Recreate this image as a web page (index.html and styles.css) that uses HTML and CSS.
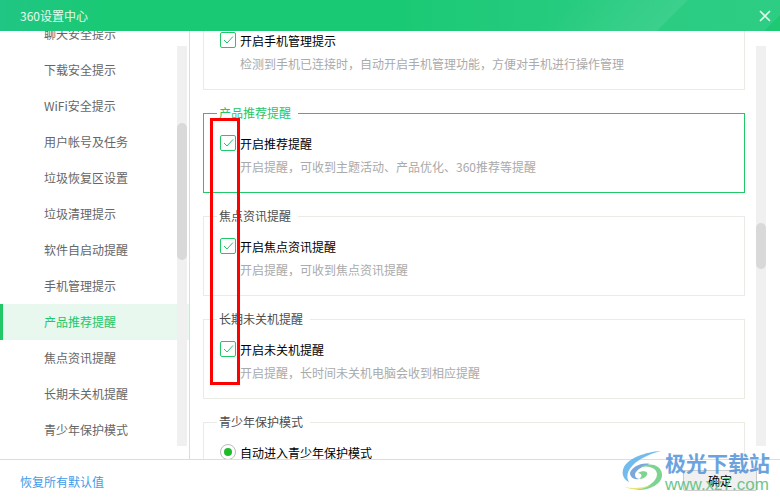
FILE: index.html
```html
<!DOCTYPE html>
<html lang="zh-CN">
<head>
<meta charset="UTF-8">
<title>360设置中心</title>
<link rel="stylesheet" href="styles.css">
</head>
<body>
<div class="window">
    <div class="header">
        <span class="header-title">360设置中心</span>
        <svg class="close" width="12" height="12" viewBox="0 0 12 12"><path d="M1 1L11 11M11 1L1 11" stroke="#e2f9ec" stroke-width="1.6" fill="none"/></svg>
    </div>
    <div class="main">
        <div class="sidebar">
            <ul class="menu">
                <li>聊天安全提示</li>
                <li>下载安全提示</li>
                <li>WiFi安全提示</li>
                <li>用户帐号及任务</li>
                <li>垃圾恢复区设置</li>
                <li>垃圾清理提示</li>
                <li>软件自启动提醒</li>
                <li>手机管理提示</li>
                <li class="active">产品推荐提醒</li>
                <li>焦点资讯提醒</li>
                <li>长期未关机提醒</li>
                <li>青少年保护模式</li>
            </ul>
            <div class="track"><div class="thumb thumb-menu"></div></div>
        </div>
        <div class="content">
            <div class="sections">
                <fieldset class="section">
                    <legend>手机管理提示</legend>
                    <div class="option"><span class="check"><svg width="14" height="14" viewBox="0 0 14 14"><path d="M3 7L6 10L12 3.5" stroke="#22c768" fill="none"/></svg></span>开启手机管理提示</div>
                    <p class="desc">检测到手机已连接时，自动开启手机管理功能，方便对手机进行操作管理</p>
                </fieldset>
                <fieldset class="section section-active">
                    <legend>产品推荐提醒</legend>
                    <div class="option"><span class="check"><svg width="14" height="14" viewBox="0 0 14 14"><path d="M3 7L6 10L12 3.5" stroke="#22c768" fill="none"/></svg></span>开启推荐提醒</div>
                    <p class="desc">开启提醒，可收到主题活动、产品优化、360推荐等提醒</p>
                </fieldset>
                <fieldset class="section">
                    <legend>焦点资讯提醒</legend>
                    <div class="option"><span class="check"><svg width="14" height="14" viewBox="0 0 14 14"><path d="M3 7L6 10L12 3.5" stroke="#22c768" fill="none"/></svg></span>开启焦点资讯提醒</div>
                    <p class="desc">开启提醒，可收到焦点资讯提醒</p>
                </fieldset>
                <fieldset class="section">
                    <legend>长期未关机提醒</legend>
                    <div class="option"><span class="check"><svg width="14" height="14" viewBox="0 0 14 14"><path d="M3 7L6 10L12 3.5" stroke="#22c768" fill="none"/></svg></span>开启未关机提醒</div>
                    <p class="desc">开启提醒，长时间未关机电脑会收到相应提醒</p>
                </fieldset>
                <fieldset class="section">
                    <legend>青少年保护模式</legend>
                    <div class="option"><span class="radio"></span>自动进入青少年保护模式</div>
                </fieldset>
            </div>
            <div class="track"><div class="thumb thumb-content"></div></div>
        </div>
    </div>
    <div class="footer">
        <a class="restore">恢复所有默认值</a>
        <button class="ok">确定</button>
    </div>

    <!-- annotation drawn over the screenshot -->
    <div class="red-mark"></div>

    <!-- site watermark -->
    <div class="watermark">
        <svg class="watermark-logo" width="44" height="42" viewBox="0 0 44 42">
            <path d="M40 1C24 2 8 8 3 17C0 23 2 29 8 32C5 27 6 21 12 15C18 9 28 4 40 1Z" fill="#62b5ec"/>
            <path d="M29 14C20 12 11 17 9 23C9 27 13 30 18 29C14 28 13 25 15 22C18 18 23 16 29 14Z" fill="#6d9fd8"/>
            <path d="M20 17C27 15 36 18 36 24C36 32 26 38 14 40C26 41 42 35 41 24C40 15 29 12 20 17Z" fill="#72cf86"/>
            <path d="M17 23C21 20 28 21 26 25C24 28 21 29 18 29C21 27 22 24 17 23Z" fill="#72cf86"/>
            <path d="M4 37C12 41 22 40 30 35C22 38 12 39 4 37Z" fill="#e8e06a"/>
        </svg>
        <div class="watermark-text">
            <div class="watermark-name">极光下载站</div>
            <div class="watermark-url">www.xz7.com</div>
        </div>
    </div>
</div>
</body>
</html>
```

FILE: styles.css
```css
* {
    box-sizing: border-box;
}
html, body {
    margin: 0;
    padding: 0;
}
body {
    font-family: "Noto Sans CJK SC", "Liberation Sans", sans-serif;
    font-size: 12px;
    background-color: #fff;
}
.window {
    position: relative;
    width: 780px;
    height: 500px;
    overflow: hidden;
    display: flex;
    flex-direction: column;
}
.header {
    flex: none;
    height: 31px;
    display: flex;
    align-items: center;
    justify-content: space-between;
    padding: 0 9px 0 20px;
    color: #e4fbef;
    background:
        linear-gradient(135deg, transparent 98%, #1ec973 98.1%),
        linear-gradient(135deg, transparent 70%, rgba(255,255,255,0.08) 84.7%, transparent 84.9%),
        linear-gradient(90deg, #20c684 0%, #19c973 14%, #1ac974 50%, #2acc82 80%, #2dcd84 100%);
}
.main {
    flex: none;
    height: 429px;
    display: flex;
    border-bottom: 1px solid #ddd;
}
.sidebar {
    flex: none;
    width: 190px;
    height: 428px;
    display: flex;
    overflow: hidden;
    position: relative;
    border-right: 1px solid #ddd;
}
.menu {
    list-style-type: none;
    margin: -15px 0 0 0;
    padding: 0;
    width: 100%;
}
.menu li {
    height: 36px;
    line-height: 36px;
    padding-left: 44px;
    color: #666;
}
.menu li.active {
    color: #22c768;
    background-color: #e8f8ee;
    border-left: 3px solid #22c768;
    padding-left: 41px;
}
.track {
    position: absolute;
    top: 15px;
    width: 10px;
    height: 400px;
    background-color: #f0f0f0;
}
.sidebar .track {
    left: 177px;
}
.thumb {
    position: absolute;
    left: 0;
    width: 10px;
    border-radius: 5px;
    background-color: #d9d9d9;
}
.thumb-menu {
    top: 77px;
    height: 137px;
}
.thumb-content {
    top: 177px;
    height: 46px;
}
.content {
    flex: 1;
    position: relative;
    height: 428px;
    overflow: hidden;
}
.content .track {
    left: 566px;
}
.sections {
    margin: -29px 0 0 13px;
    width: 542px;
    display: flex;
    flex-direction: column;
    gap: 15px;
}
.section {
    margin: 0;
    padding: 14px 0 0 16px;
    min-width: 0;
    height: 88px;
    flex: none;
    border: 1px solid #ebebe6;
    border-radius: 0;
}
.section legend {
    margin-left: -3px;
    padding: 0 7px 0 2px;
    line-height: 16px;
    color: #4d4d4d;
}
.section-active {
    border-color: #22c768;
}
.section-active legend {
    color: #22c768;
}
.option {
    display: flex;
    align-items: center;
    height: 16px;
    color: #000;
}
.check {
    flex: none;
    width: 16px;
    height: 16px;
    margin-right: 4px;
    border: 1px solid #22c768;
    border-radius: 2px;
    display: flex;
}
.radio {
    flex: none;
    width: 16px;
    height: 16px;
    margin-right: 4px;
    border: 1px solid #bbb;
    border-radius: 50%;
    display: flex;
    align-items: center;
    justify-content: center;
}
.radio::after {
    content: "";
    width: 8px;
    height: 8px;
    border-radius: 50%;
    background-color: #1fbb2c;
}
.desc {
    margin: 8px 0 0 20px;
    line-height: 16px;
    color: #aaa;
}
.footer {
    flex: 1;
    display: flex;
    align-items: center;
    justify-content: space-between;
    padding: 0 23px 0 20px;
}
.restore {
    padding-top: 3px;
    color: #3d9be9;
}
.ok {
    width: 74px;
    height: 21px;
    padding: 0;
    font-family: inherit;
    font-size: 12px;
    color: #000;
    background-color: #f0f0f0;
    border: 1px solid #ccc;
    border-radius: 2px;
}
.red-mark {
    position: absolute;
    left: 210px;
    top: 118px;
    width: 30px;
    height: 267px;
    border: 3px solid #f00;
}
.watermark {
    position: absolute;
    left: 621px;
    top: 450px;
    display: flex;
    opacity: 0.9;
}
.watermark-text {
    display: flex;
    flex-direction: column;
}
.watermark-name {
    font-size: 21px;
    line-height: 24px;
    font-weight: 700;
    color: #4a90d9;
    opacity: 0.9;
}
.watermark-url {
    margin-top: 3px;
    font-family: "Liberation Sans", sans-serif;
    font-size: 17px;
    line-height: 16px;
    color: #5cc17f;
}
```
